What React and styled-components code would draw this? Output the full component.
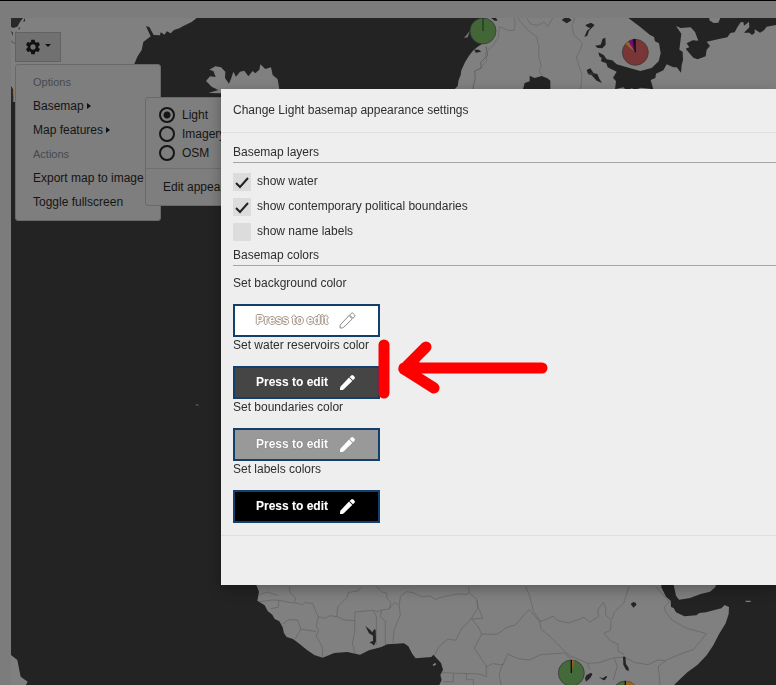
import React from "react";
import styled, { createGlobalStyle } from "styled-components";
import { MdSettings } from "react-icons/md";

const GlobalStyle = createGlobalStyle`
  * { box-sizing: border-box; }
  body {
    margin: 0;
    font-family: "Liberation Sans", Arial, sans-serif;
    font-size: 12px;
    line-height: 18px;
    color: #2e2e2e;
  }
`;

const Page = styled.div`
  min-height: 100vh;
  padding: 17px 0 0 11px;
  background: #7c7c7c;
  border-top: 1px solid #000;
`;

const MapArea = styled.main`
  position: relative;
  height: calc(100vh - 18px);
  overflow: hidden;
  background: #232323;
`;

const MapDrawing = styled.svg`
  position: absolute;
  inset: 0;
  width: 100%;
  height: 100%;
`;

const Controls = styled.nav`
  position: absolute;
  top: 14px;
  left: 4px;
  display: flex;
  flex-direction: column;
  align-items: flex-start;
  gap: 2px;
  color: #151515;
`;

const GearButton = styled.button`
  display: flex;
  align-items: center;
  justify-content: center;
  gap: 3px;
  width: 46px;
  height: 30px;
  padding: 0 1px 0 0;
  color: #111;
  background: #717171;
  border: 1px solid #626262;
`;

const Caret = styled.span`
  margin-bottom: 4px;
  border: 3px solid transparent;
  border-top-color: #111;
  border-bottom: 0;
`;

const Menu = styled.div`
  position: relative;
  width: 146px;
  padding: 5px 0 6px;
  background: #7e7e7e;
  border: 1px solid #696969;
  border-radius: 3px;
`;

const MenuHeading = styled.div`
  padding: 0 17px;
  font-size: 11px;
  line-height: 24px;
  color: #454a4e;
`;

const MenuItem = styled.button`
  display: flex;
  align-items: center;
  gap: 3px;
  width: 100%;
  height: 24px;
  padding: 0 17px;
  font: inherit;
  color: inherit;
  white-space: nowrap;
  background: none;
  border: 0;
`;

const SideCaret = styled.span`
  border: 3px solid transparent;
  border-left: 4px solid #111;
  border-right: 0;
`;

const SubMenu = styled.div`
  position: absolute;
  top: 32px;
  left: 129px;
  width: 160px;
  height: 109px;
  padding: 7px 0 0;
  background: #7e7e7e;
  border: 1px solid #696969;
  border-radius: 3px;
`;

const RadioRow = styled.label`
  display: flex;
  align-items: center;
  gap: 7px;
  height: 19px;
  padding-left: 13px;
`;

const Radio = styled.input`
  appearance: none;
  width: 16px;
  height: 16px;
  margin: 0;
  border: 2px solid #151515;
  border-radius: 50%;
  &:checked { background: radial-gradient(circle, #151515 3px, transparent 4px); }
`;

const SubMenuFooter = styled.div`
  margin-top: 6px;
  padding-top: 6px;
  border-top: 1px solid #6e6e6e;
`;

const Overlay = styled.div`
  position: fixed;
  inset: 0;
  display: flex;
  align-items: flex-start;
  padding: 89px 0 0 221px;
`;

const Modal = styled.section`
  flex: 1;
  background: #eee;
  box-shadow: 0 4px 12px rgba(0, 0, 0, 0.3);
`;

const ModalHeader = styled.header`
  padding: 12px 12px 13px;
  border-bottom: 1px solid #dcdfe1;
`;

const ModalTitle = styled.h1`
  margin: 0;
  font: inherit;
`;

const ModalBody = styled.div`
  padding: 10px 0 12px 12px;
`;

const ModalFooter = styled.footer`
  height: 50px;
  border-top: 1px solid #d9dfe3;
`;

const SectionTitle = styled.h2`
  margin: 0;
  padding-bottom: 1px;
  font: inherit;
  border-bottom: 1px solid #a5a5a5;
`;

const CheckList = styled.div`
  display: flex;
  flex-direction: column;
  gap: 7px;
  padding: 10px 0 5px;
`;

const CheckRow = styled.label`
  display: flex;
  gap: 6px;
  line-height: 16px;
`;

const CheckBox = styled.span`
  display: grid;
  width: 18px;
  height: 18px;
  background: #dcdcdc;
  > * { grid-area: 1 / 1; }
  input { appearance: none; width: 18px; height: 18px; margin: 0; }
  svg { pointer-events: none; visibility: hidden; }
  input:checked + svg { visibility: visible; }
`;

const Fields = styled.div`
  display: grid;
  padding-top: 9px;
`;

const Field = styled.div`
  position: relative;
  display: flex;
  flex-direction: column;
  align-items: flex-start;
  gap: 12px;
  line-height: 17px;
`;

const ColorButton = styled.button`
  display: flex;
  align-items: center;
  justify-content: space-between;
  width: 147px;
  height: 33px;
  padding: 0 22px 0 21px;
  font: inherit;
  font-weight: bold;
  color: #fff;
  text-shadow: ${(p) => (p.$outlined
    ? "-1px 0 #a8988c, 1px 0 #a8988c, 0 -1px #a8988c, 0 1px #a8988c"
    : "0 0 1px #555")};
  background: ${(p) => p.$fill};
  border: 2px solid #123f6c;
`;

const Annotation = styled.svg`
  position: absolute;
  top: 0;
  left: 145px;
  pointer-events: none;
`;

const layers = [
  { label: "show water", on: true },
  { label: "show contemporary political boundaries", on: true },
  { label: "show name labels", on: false },
];

const colors = [
  { id: "background", label: "Set background color", fill: "#ffffff", outlined: true },
  { id: "water", label: "Set water reservoirs color", fill: "#454545", marked: true },
  { id: "boundaries", label: "Set boundaries color", fill: "#999999" },
  { id: "labels", label: "Set labels colors", fill: "#000000" },
];

function Pencil({ outlined }) {
  return (
    <svg width="17" height="17" viewBox="0 0 17 17" fill="#fff" stroke={outlined ? "#888" : "none"} strokeWidth="1">
      <path d="M1 16Q.8 13.3 1.8 12.2L10 3.6 13.3 6.9 4.8 15.2Q3.5 16.3 1 16Z" strokeLinejoin="round" />
      <path d="M10.6 3 12.2 1.4Q13.2.5 14.3 1.5L15.5 2.7Q16.5 3.8 15.5 4.8L13.9 6.3Z" />
    </svg>
  );
}

function Pie({ x, y, fill, children }) {
  return (
    <g transform={`translate(${x} ${y})`}>
      <circle r="39" fill={fill} stroke="#333" strokeWidth="2" />
      {children}
    </g>
  );
}

function WorldMap() {
  return (
    <MapDrawing viewBox="33 54 2295 2001" preserveAspectRatio="xMinYMin slice" aria-hidden="true">
      <g fill="#808080">
        <path d="M33 54H590L575 66 550 78 538 85 522 90 512 100 500 94 494 104 482 97 480 106 461 105 448 81 438 79 452 109 430 126 425 150 412 170 403 192V205L45 306H33Z" />
        <path d="M625 279 655 270 636 261 618 243 630 229 647 231 640 213 628 209 646 199 663 202 676 215 675 234 687 251 694 234 700 215 708 230 720 215 733 212 745 229 758 213 766 220 778 209 781 193 796 207 813 202 818 225 833 238 838 268V280H660Z" />
        <path d="M33 2535 52 2550 62 2600 83 2615 70 2640H33Z" transform="translate(0 -570)" />
      </g>
      <path d="M33 54H69L60 66 52 80 39 84 33 80ZM33 92 39 98 38 108ZM33 257 40 270V305L33 310Z" fill="#292929" />
      <path d="M34 122C42 137 57 121 51 113L64 104M47 95 58 104 70 119M47 184 61 170M36 127 50 132" fill="none" stroke="#656565" strokeWidth="4" />
      <path d="M43 257A39 39 0 0 0 43 292Z" fill="#a66c1c" />
      <path d="M73 54 76 63 70 66ZM56 82 61 84 56 90Z" fill="#292929" />

      <g transform="translate(660 0)">
        <path d="M704 268 713 258 716 240 722 225 724 211 735 187 746 169 758 153 772 141 789 130 795 54H1668V275H704Z" fill="#808080" />
        <path d="M732 114 750 92 743 112Z" fill="#777" />
        <path d="M763 149H776L784 155 767 158ZM813 54H828L833 62 824 62Z" fill="#222" />
        <path d="M758 268 766 234 764 213 784 204 782 188 803 165 798 138" fill="none" stroke="#626262" strokeWidth="3" />
      </g>

      <g transform="translate(1440 0)">
        <g fill="none" stroke="#636363" strokeWidth="2">
          <path d="M0 206 20 182 17 159 37 139 55 112 58 80 88 92 102 91 106 68 102 54" />
          <path d="M113 54 145 92 170 110 177 142 176 169 184 197 177 213 186 226M140 54 152 72 173 76 193 66 203 80 218 54" />
          <path d="M284 54 276 80 282 105 307 129 300 151 289 171 297 198 306 226 302 268" />
        </g>
        <g fill="#232323">
          <path d="M445 54 480 80 509 104 522 111 525 124 537 130 542 160 536 184 515 204 481 213 446 203 410 193 397 181 380 178 371 165 355 157 358 169 365 174 363 184 379 190 383 202 410 215 399 233 408 244 405 268 430 262 438 269 456 265 464 269 483 263 520 268 512 240 526 234 528 221 550 211 560 193 580 202 590 202 603 218 605 195 609 180 608 155 598 149 604 101 588 78 602 84 632 82 645 96 655 122 638 121 620 130 628 142 617 146 640 173 653 178 677 169 680 149 690 138 680 125 720 116 742 112 751 99 764 97 772 82 782 67 790 66 792 77 807 65 808 82 792 98 808 98 816 105 824 99 824 88 840 98 852 91 860 80 888 75V54H721L715 68 701 69 688 61V54Z" />
          <path d="M245 60 253 54H267L275 61 260 70Z" />
          <path d="M316 75 333 68 344 75 327 92 322 107 313 111 321 92 331 84 322 81Z" />
          <path d="M345 137 362 134 368 116 376 113 377 134 367 145 353 144Z" />
          <path d="M320 210 331 205 341 220 352 222 358 236 366 249 350 242 335 226 324 221Z" />
          <path d="M129 268 134 249 149 244V227L164 234 185 228 202 235 211 242V268Z" />
        </g>
      </g>

      <g transform="translate(660 1710)">
        <path d="M107 40 117 65 112 92 134 106 143 123 157 134 164 147 178 154 188 172 192 190 200 201 219 207 236 220 260 239 283 255 308 263 343 249 382 246 420 254 447 241 484 231 502 223 552 220 565 229 577 252 587 265 634 261 640 254 652 267 663 279 669 299 661 315 665 330 658 345H1362L1383 325 1402 307 1432 285 1460 256 1480 226 1496 194 1517 160 1526 132 1527 111 1514 105 1504 115 1458 127 1438 129 1429 136 1393 139 1368 127 1361 114 1353 111 1352 92 1338 80 1324 52V40Z" fill="#808080" />
        <path d="M1360 40 1368 77 1377 89 1410 84 1442 72 1470 65 1487 50V40ZM1576 92H1592V96H1578Z" fill="#808080" />
        <g fill="none" stroke="#606060" strokeWidth="2" strokeLinejoin="round">
          <path d="M114 75 142 66 174 76M117 95 158 90 177 91 224 100 227 84 209 66V50M227 99 248 104 256 97 278 101 289 127 295 141 289 169 296 181 288 197 307 231 308 263M177 91 174 112 152 116M188 162 207 149 233 150 242 177 288 185M242 177 226 207" />
          <path d="M295 140 314 145 330 137 350 140 353 111 365 98 382 82 385 67 414 63 423 52M350 139 373 150 405 152M470 50 485 66 500 69 500 83 513 98 507 117 485 120 472 125 458 121 405 126 404 187 397 219 405 252M459 124 469 139 469 225M485 120 481 139 496 153V225M507 117 525 97 538 108 541 135 529 163 522 181 519 218M538 105 541 80 559 65 580 68 604 80 630 78 646 88 670 80 711 72 741 73 748 65 745 50" />
          <path d="M745 66 771 88 773 115 754 145 741 161 725 175 707 211 684 207 656 231 643 257M770 91 775 112 788 145 755 147 773 168 785 192 810 193 832 192 861 172 886 165 915 131 927 119 935 128 960 155 975 150 1000 138 1012 151 1045 159 1072 150 1092 142 1109 156 1136 140 1133 120 1150 97 1157 115 1157 134 1173 151 1172 180 1152 190 1172 213 1194 223 1194 244 1213 252" />
          <path d="M917 50 927 74 935 100 940 124 959 151 963 177 985 195 1008 217 1032 243 1050 257 1103 280 1138 278 1179 264 1212 261 1246 278 1284 284 1313 270 1337 272 1315 289 1320 345M1337 271 1386 250 1420 239 1460 191 1400 175 1356 150 1337 126 1333 110 1348 96 1307 50" />
          <path d="M785 192 763 235 799 288V320L777 312 665 308M799 290 818 281 849 285 863 252 895 266 927 270 962 254 1031 249 1053 266M849 280 837 313 843 345M700 310V335H670M739 310V329H760V345" />
          <path d="M1176 147 1182 128 1211 99 1227 50M1103 280 1108 298M1182 265 1192 288 1180 330" />
        </g>
        <g fill="#252525">
          <path d="M436 168 450 179 457 187 463 177 467 180 468 214 462 227 457 222 448 217 459 213 459 197 447 190Z" />
          <path d="M1232 102 1240 96 1248 99 1249 105 1240 113ZM1209 260H1216L1218 282 1226 294V304L1218 299 1210 284ZM1095 325 1099 316 1113 308 1117 313 1111 324 1098 335ZM1136 320 1148 325 1158 318 1162 320 1154 331 1148 329Z" />
        </g>
        <path d="M638 284 646 278 648 284 640 288Z" fill="#888" />
      </g>

      <Pie x={1449} y={93} fill="#436637"><path d="M0-39V0" stroke="#1b2918" strokeWidth="3" /></Pie>
      <Pie x={1906} y={157} fill="#783636">
        <path d="M0 0-30-25A39 39 0 0 1-21-33Z" fill="#8d652d" />
        <path d="M0 0-21-33A39 39 0 0 1-7-38Z" fill="#7c087d" />
        <path d="M0 0-7-38A39 39 0 0 1 0-39Z" fill="#201020" stroke="#201020" strokeWidth="3" />
      </Pie>
      <Pie x={1714} y={2019} fill="#44693a">
        <path d="M0 0V-39A39 39 0 0 1 10-37Z" fill="#925f25" /><path d="M0 0V-39" stroke="#111" strokeWidth="4" />
      </Pie>
      <Pie x={1876} y={2082} fill="#44693a">
        <path d="M0 0V-39A39 39 0 0 1 39 0Z" fill="#926323" /><path d="M0 0V-39" stroke="#111" strokeWidth="4" />
      </Pie>
      <path d="M1762 220H1776L1783 224H1768ZM1892 1707H1899V1709H1892Z" fill="#383838" />
      <path d="M587 1213H594L597 1217H588Z" fill="#555" />
    </MapDrawing>
  );
}

function MapControls() {
  return (
    <Controls aria-label="Map options">
      <GearButton aria-label="Map settings"><MdSettings size={18} /><Caret /></GearButton>
      <Menu>
        <MenuHeading>Options</MenuHeading>
        <MenuItem>Basemap<SideCaret /></MenuItem>
        <MenuItem>Map features<SideCaret /></MenuItem>
        <MenuHeading>Actions</MenuHeading>
        <MenuItem>Export map to image</MenuItem>
        <MenuItem>Toggle fullscreen</MenuItem>
        <SubMenu>
          {["Light", "Imagery", "OSM"].map((name) => (
            <RadioRow key={name}>
              <Radio type="radio" name="basemap" defaultChecked={name === "Light"} />
              {name}
            </RadioRow>
          ))}
          <SubMenuFooter><MenuItem>Edit appearance</MenuItem></SubMenuFooter>
        </SubMenu>
      </Menu>
    </Controls>
  );
}

function ColorField({ id, label, fill, outlined, marked }) {
  return (
    <Field>
      <label htmlFor={id}>{label}</label>
      <ColorButton id={id} $fill={fill} $outlined={outlined}>
        Press to edit
        <Pencil outlined={outlined} />
      </ColorButton>
      {marked && (
        <Annotation width="172" height="64" viewBox="0 0 172 64" fill="none" stroke="#f00" strokeWidth="11" strokeLinecap="round" strokeLinejoin="round" aria-hidden="true">
          <path d="M6 8V56M164 31H26M48 10 26 32 56 51" />
          <path d="M26 32 36 26V35Z" fill="#f00" />
        </Annotation>
      )}
    </Field>
  );
}

export default function App() {
  return (
    <>
      <GlobalStyle />
      <Page>
        <MapArea>
          <WorldMap />
          <MapControls />
        </MapArea>
      </Page>
      <Overlay>
        <Modal role="dialog" aria-labelledby="dialog-title">
          <ModalHeader>
            <ModalTitle id="dialog-title">Change Light basemap appearance settings</ModalTitle>
          </ModalHeader>
          <ModalBody>
            <SectionTitle>Basemap layers</SectionTitle>
            <CheckList>
              {layers.map(({ label, on }) => (
                <CheckRow key={label}>
                  <CheckBox>
                    <input type="checkbox" defaultChecked={on} />
                    <svg width="18" height="18" viewBox="0 0 18 18" fill="none" stroke="#222" strokeWidth="2">
                      <path d="M3 10 7 14 15 5" />
                    </svg>
                  </CheckBox>
                  {label}
                </CheckRow>
              ))}
            </CheckList>
            <SectionTitle>Basemap colors</SectionTitle>
            <Fields>
              {colors.map((c) => <ColorField key={c.id} {...c} />)}
            </Fields>
          </ModalBody>
          <ModalFooter />
        </Modal>
      </Overlay>
    </>
  );
}
